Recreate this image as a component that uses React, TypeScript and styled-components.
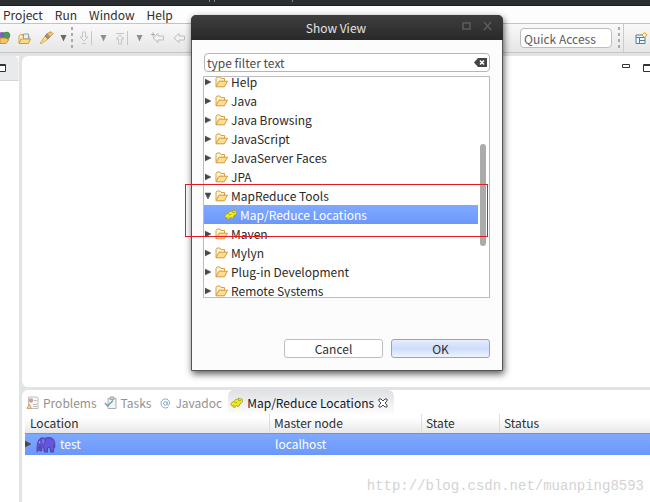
import React from "react";
import styled, { createGlobalStyle } from "styled-components";

const Global = createGlobalStyle`
  * { box-sizing: border-box; }
  body { margin: 0; overflow: hidden; }
  body, button, input, table {
    font-family: "Noto Sans CJK SC", "Open Sans", sans-serif;
    font-size: 12px;
    line-height: 18px;
    color: #2e2e2e;
  }
  svg { display: block; flex: none; }
`;

const Page = styled.div`
  position: relative;
  display: flex;
  flex-direction: column;
  height: 100vh;
  min-height: 480px;
  overflow: hidden;
  background: #fff;
`;

const TopBar = styled.div`
  height: 6px;
  flex: none;
  background: #2b2e31;
  border-bottom: 1px solid #1a1c1e;
  padding-left: 209px;
`;

const MenuBar = styled.nav`
  display: flex;
  flex: none;
  gap: 12px;
  height: 18px;
  padding-left: 3px;
  background: #fdfdfd;
  border-bottom: 1px solid #c4c4c4;
`;

const MenuItem = styled.button`
  border: 0;
  padding: 0;
  background: none;
  line-height: 17px;
`;

const Toolbar = styled.div`
  display: flex;
  flex: none;
  align-items: center;
  height: 29px;
  background: linear-gradient(#f9f9f9, #e6e6e6);
  border-bottom: 1px solid #c6c6c6;
`;

const ToolButton = styled.button<{ $w: number }>`
  display: flex;
  align-items: center;
  justify-content: center;
  width: ${(p) => p.$w}px;
  height: 20px;
  padding: 0;
  border: 0;
  background: none;
`;

const Dots = styled.span`
  width: 2px;
  height: 22px;
  background: repeating-linear-gradient(#aaa 0 3px, transparent 3px 6px);
`;

const Rule = styled.span`
  width: 1px;
  height: 28px;
  margin: 0 9px 0 3px;
  background: #ccc;
`;

const QuickAccess = styled.input`
  width: 92px;
  height: 20px;
  margin: 0 6px 0 auto;
  padding: 0 3px;
  border: 1px solid #bdbdbd;
  border-radius: 4px;
  background: #fff;
  &::placeholder { color: #5c5c5c; opacity: 1; }
`;

const Workbench = styled.div`
  display: flex;
  flex: 1;
  min-height: 0;
  background: #e2e3e4;
`;

const SideStrip = styled.div`
  width: 19px;
  flex: none;
  margin-top: 3px;
  background: #fff;
`;

const SideTab = styled.div`
  height: 25px;
  padding-top: 8px;
  background: #e9eaeb;
  border-right: 1px solid #f4f4f4;
  border-bottom: 1px solid #d6d6d6;
  border-radius: 0 5px 0 0;
`;

const Areas = styled.div`
  display: flex;
  flex: 1;
  flex-direction: column;
  min-width: 0;
  gap: 3px;
  padding: 3px 0 0 3px;
`;

const Editor = styled.section`
  display: flex;
  flex: 1;
  justify-content: flex-end;
  gap: 13px;
  padding-top: 8px;
  background: #fff;
  border-radius: 6px 0 0 6px;
`;

const BottomPanel = styled.section`
  height: 112px;
  flex: none;
  padding-left: 3px;
  background: #fff;
  border-radius: 6px 0 0 0;
`;

const Tabs = styled.div`
  display: flex;
  height: 24px;
`;

const Tab = styled.button<{ $active?: boolean }>`
  display: flex;
  align-items: center;
  gap: 4px;
  height: 24px;
  padding: 2px 6px 0 ${(p) => (p.$active ? 2 : 1)}px;
  border: 0;
  border-radius: 6px 6px 0 0;
  background: ${(p) => (p.$active ? "linear-gradient(#dfe0e3, #fdfdfd)" : "none")};
  color: ${(p) => (p.$active ? "#14141f" : "#929292")};
  white-space: nowrap;
`;

const Table = styled.table`
  width: 100%;
  table-layout: fixed;
  border-collapse: collapse;
`;

const Head = styled.th<{ $w?: number }>`
  width: ${(p) => (p.$w ? p.$w + "px" : "auto")};
  height: 19px;
  padding: 0 0 0 5px;
  text-align: left;
  font-weight: 400;
  color: #2e2e2e;
  background: linear-gradient(#fff 20%, #e8e8e8);
  border-bottom: 1px solid #7d92bd;
  & + & { box-shadow: inset 1px 0 #ddd; }
`;

const Cell = styled.td`
  height: 22px;
  padding: 0 0 0 6px;
  color: #fff;
`;

const SelectedRow = styled.tr`
  background: linear-gradient(#80aaff, #6b97fa);
`;

const NodeLabel = styled.div`
  display: flex;
  align-items: center;
  gap: 4px;
  margin-left: -6px;
`;

const Watermark = styled.div`
  position: absolute;
  right: 6px;
  bottom: 7px;
  font-family: "Liberation Mono", monospace;
  font-size: 14px;
  line-height: 18px;
  color: #d3d3d3;
`;

const Dialog = styled.section`
  position: absolute;
  top: 15px;
  left: 191px;
  width: 312px;
  border: 1px solid #555;
  border-radius: 5px 5px 0 0;
  background: #fcfcfc;
  box-shadow: 1px 3px 7px rgba(0, 0, 0, 0.65);
`;

const TitleBar = styled.header`
  display: grid;
  grid-template-columns: 44px 1fr 44px;
  align-items: center;
  height: 25px;
  margin: -1px -1px 0;
  border-radius: 5px 5px 0 0;
  background: linear-gradient(#3e3e3e, #292929);
`;

const Title = styled.h1`
  margin: 0 0 0 -22px;
  font-size: 12px;
  font-weight: 400;
  line-height: 18px;
  text-align: center;
  color: #e4e4e4;
`;

const WindowButtons = styled.div`
  display: flex;
  padding-bottom: 4px;
`;

const DialogBody = styled.div`
  padding: 13px 12px 12px 11px;
`;

const FilterBox = styled.div`
  display: flex;
  align-items: center;
  height: 19px;
  margin-left: 1px;
  padding: 0 2px;
  border: 1px solid #b5b5b5;
  border-radius: 4px;
  background: #fff;
`;

const FilterInput = styled.input`
  flex: 1;
  min-width: 0;
  height: 17px;
  padding: 0;
  border: 0;
  outline: 0;
  background: none;
  &::placeholder { color: #4c4c4c; opacity: 1; }
`;

const Tree = styled.div`
  display: flex;
  height: 222px;
  margin-top: 4px;
  overflow: hidden;
  border: 1px solid #bcbcbc;
  background: #fff;
`;

const TreeList = styled.ul`
  flex: 1;
  margin: -5px 2px 0 0;
  padding: 0;
  list-style: none;
  line-height: 12px;
`;

const TreeRow = styled.li<{ $child?: boolean }>`
  display: flex;
  align-items: center;
  gap: 3px;
  height: 19px;
  padding-left: ${(p) => (p.$child ? 20 : 1)}px;
  background: ${(p) => (p.$child ? "linear-gradient(#80aaff, #6b97fa)" : "none")};
  color: ${(p) => (p.$child ? "#fff" : "#2a2a2a")};
`;

const Expand = styled.span`
  margin-right: 1px;
`;

const Thumb = styled.div`
  width: 6px;
  height: 102px;
  margin: 67px 3px 0 0;
  border-radius: 3px;
  background: #ababab;
`;

const Buttons = styled.div`
  display: flex;
  justify-content: flex-end;
  gap: 8px;
  margin-top: 41px;
`;

const DialogButton = styled.button<{ $primary?: boolean }>`
  width: 99px;
  height: 19px;
  padding: 0;
  line-height: 16px;
  border: 1px solid ${(p) => (p.$primary ? "#94a4c6" : "#bdbdbd")};
  border-radius: 3px;
  background: ${(p) => (p.$primary ? "linear-gradient(#e6edfc, #cddcfa 50%, #edf4ff)" : "#fff")};
`;

const Highlight = styled.div`
  position: absolute;
  top: 184px;
  left: 185px;
  width: 303px;
  height: 53px;
  border: 1px solid #e01b22;
  pointer-events: none;
`;

const Folder = () => (
  <svg width="13" height="12" viewBox="0 0 13 12">
    <path d="M1 10.5V2.5L2 1h3l1 1.5h3.5V5" fill="#fff3cc" stroke="#d6a049" />
    <path d="M1 10.8 4 5.2h8.5L9.3 10.8z" fill="#fddf92" stroke="#d6963a" strokeLinejoin="round" />
  </svg>
);

const Expander = ({ open }: { open?: boolean }) => (
  <Expand>
    <svg width="6" height="8" viewBox="0 0 6 8">
      <path d={open ? "M0 1h6L3 7z" : "M0 1v6l6-3z"} fill="#484848" stroke="#484848" strokeWidth=".5" />
    </svg>
  </Expand>
);

const Hadoop = () => (
  <svg width="13" height="12" viewBox="0 0 13 12">
    <path
      d="M.8 7.2 2.2 5l2-.6L5.4 2.6l2.2-.4.8-1 2 .4 1.8.6.3 2.3-1.3 1.8-1.4.4-.6 2.2-1.5.8-.6-1.4-1.4.7-.6 1.4-1.8-.2-.3-1.4-1.4-.2z"
      fill="#f0ee20"
      stroke="#a29a20"
      strokeWidth=".8"
      strokeLinejoin="round"
    />
    <path d="M4.2 4.6 5.6 6l1.8-.8M8.4 1.6l.4 2 2.2.2M3.6 8.8l1.2-1" fill="none" stroke="#8f8716" strokeWidth=".7" />
  </svg>
);

const Elephant = () => (
  <svg width="20" height="17" viewBox="0 0 20 17">
    <path
      d="M1.2 15.8C.8 12 1 7 3 3.8 4 1.8 6.5 1.2 8.5 2.4 11 1.2 15 1 17 3c2 2 2 5 1.7 8.5L18 9.5l-.6 6.5h-2.8l-.6-4.5-2.6.3.2 4.2H8.4l-.9-5-1.3-.8L5.6 15H3.7l.5-5.6C3.2 11 3.2 14.6 1.2 15.8z"
      fill="#6554dd"
      stroke="#473986"
      strokeWidth=".8"
    />
    <path d="M8.5 3c1.3 2 .8 4.5-1 6L5 6.5 5.5 3" fill="#7c6cf0" stroke="#44358e" strokeWidth=".7" />
    <path d="M3.2 6.2h1" stroke="#fff" />
  </svg>
);

const Caret = ({ dim }: { dim?: boolean }) => (
  <svg width="7" height="7" viewBox="0 0 7 7">
    <path d="M.5 0h6l-3 6.5z" fill={dim ? "#8e8e8e" : "#666"} />
  </svg>
);

const Globe = () => (
  <svg width="11" height="14" viewBox="0 0 11 14">
    <circle cx="2" cy="4" r="3" fill="#8062b4" />
    <circle cx="6.5" cy="4.5" r="3.4" fill="#4e9b58" stroke="#347452" strokeWidth=".6" />
    <path d="M0 7h5l4 1.5L6 12.5H0z" fill="#f4c765" stroke="#bb8231" strokeWidth=".8" />
  </svg>
);

const OpenFolder = () => (
  <svg width="13" height="13" viewBox="0 0 13 13">
    <path d="M1 11V4l1.5-1.5h2V4H11v3" fill="#fff0bd" stroke="#d6a049" />
    <path d="M5.5 2h5v5h-5z" fill="#e7f0fa" stroke="#88a4c0" />
    <path d="M1 11.5 3 7h9.5l-2.2 4.5z" fill="#fddb86" stroke="#d6963a" />
  </svg>
);

const Torch = () => (
  <svg width="15" height="14" viewBox="0 0 15 14">
    <path d="M1 12.5 6 5l3 3-6.5 4.5z" fill="#fbd987" stroke="#d59a48" strokeWidth=".8" />
    <path d="m6 5 2-2.3L11 5.8 9 8z" fill="#a68b9a" stroke="#77636d" strokeWidth=".6" />
    <path d="m8 2.7 4-2 2 2-3 3.1z" fill="#f6c466" stroke="#c3852d" strokeWidth=".8" />
  </svg>
);

const DownArrow = () => (
  <svg width="13" height="14" viewBox="0 0 13 14">
    <path d="M3.5 1h3v5H9L5 10 1 6h2.5zM3 12.5h4M12.5 0v14" fill="none" stroke="#c6c6c6" />
  </svg>
);

const UpArrow = () => (
  <svg width="13" height="14" viewBox="0 0 13 14">
    <path d="M3.5 13h3V8H9L5 4 1 8h2.5zM1 2.5h8M12.5 0v14" fill="none" stroke="#c6c6c6" />
  </svg>
);

const LeftArrow = ({ star }: { star?: boolean }) => (
  <svg width="14" height="12" viewBox="0 0 14 12">
    <path d="M2 6 7 1.5V4h5.5v4H7v2.5z" fill="#f2f2f2" stroke="#bdbdbd" />
    {star && <path d="M0 2.5h4M2 .5v4" stroke="#aaa" />}
  </svg>
);

const Perspective = () => (
  <svg width="13" height="13" viewBox="0 0 13 13">
    <path d="M1 3h9v8.5H1z" fill="#eff7fd" stroke="#567d99" />
    <path d="M1 5.5h9M4.5 5.5v6M4.5 8.5H10" stroke="#567d99" fill="none" />
    <path d="m9.5.5 2.5 2.5-2.5 2.5L7 3z" fill="#fff3b1" stroke="#c9a537" />
  </svg>
);

const Problems = () => (
  <svg width="13" height="14" viewBox="0 0 13 14">
    <path d="M2.5 1H11l1 1v10.5H2.5z" fill="#f8f8f8" stroke="#c1bcb6" />
    <circle cx="5" cy="4.5" r="2.2" fill="#dc9c90" />
    <path d="M1 12.5 3.2 8l2.3 4.5z" fill="#f0d49b" stroke="#c8a778" />
    <path d="M8 4.5h3M7 8.5h4M7 10.5h4" stroke="#b9bec8" />
  </svg>
);

const Tasks = () => (
  <svg width="13" height="14" viewBox="0 0 13 14">
    <path d="M4 2.5h8v10H4z" fill="#f2f4f5" stroke="#b1adaa" />
    <path d="M6 1h4v2.5H6z" fill="#d2d2cf" stroke="#a9a6a0" />
    <path d="m1 7 2.5 3L9 4.5" fill="none" stroke="#6ca0b9" strokeWidth="1.5" />
  </svg>
);

const At = () => (
  <svg width="13" height="11" viewBox="-2 0 13 11" fill="none" stroke="#86aaca">
    <circle cx="5.3" cy="5.5" r="1.8" />
    <path d="M7.2 3.5v3c.5 1.3 2.5.6 2.5-1.2C9.5 2.5 7.8 1 5.4 1 2.8 1 1 2.8 1 5.5S3 10 5.5 10c1 0 2-.3 2.8-.9" />
  </svg>
);

const CloseTab = () => (
  <svg width="10" height="10" viewBox="0 0 10 10">
    <path d="M1 1h2l2 2 2-2h2v2L7 5l2 2v2H7L5 7 3 9H1V7l2-2-2-2z" fill="#fff" stroke="#4a4a4a" />
  </svg>
);

const ClearIcon = () => (
  <svg width="13" height="9" viewBox="0 0 13 9">
    <path d="M0 4.5 4 0h9v9H4z" fill="#454545" />
    <path d="m6 2.5 4 4m0-4-4 4" stroke="#fff" strokeWidth="1.5" />
  </svg>
);

const Minimize = () => (
  <svg width="8" height="4" viewBox="0 0 8 4">
    <path d="M.5.5h7v3h-7z" fill="#fff" stroke="#333" />
  </svg>
);

const Maximize = () => (
  <svg width="7" height="9" viewBox="0 0 7 9">
    <path d="M8 .5H.5v7H8M0 1.5h8" fill="none" stroke="#333" />
  </svg>
);

const Restore = () => (
  <svg width="7" height="9" viewBox="0 0 7 9">
    <path d="M0 .5h5.5v7H0M0 1.5h6" fill="#fff" stroke="#333" />
  </svg>
);

const above = ["Help", "Java", "Java Browsing", "JavaScript", "JavaServer Faces", "JPA"];
const below = ["Maven", "Mylyn", "Plug-in Development", "Remote Systems"];

const Category = ({ name, open }: { name: string; open?: boolean }) => (
  <TreeRow>
    <Expander open={open} />
    <Folder />
    {name}
  </TreeRow>
);

export default function App() {
  return (
    <Page>
      <Global />
      <TopBar>
        <svg width="86" height="2" viewBox="0 0 86 2">
          <path d="M0 0h1v2H0zM5 0h1v2H5zM83 0h1v2h-1z" fill="#85888a" />
        </svg>
      </TopBar>
      <MenuBar>
        {["Project", "Run", "Window", "Help"].map((m) => (
          <MenuItem key={m}>{m}</MenuItem>
        ))}
      </MenuBar>
      <Toolbar>
        <ToolButton $w={11} aria-label="New web project"><Globe /></ToolButton>
        <ToolButton $w={26} aria-label="Open"><OpenFolder /></ToolButton>
        <ToolButton $w={19} aria-label="Search"><Torch /></ToolButton>
        <ToolButton $w={15} aria-label="Search options"><Caret /></ToolButton>
        <Dots />
        <ToolButton $w={24} aria-label="Next annotation"><DownArrow /></ToolButton>
        <ToolButton $w={12} aria-label="Next options"><Caret dim /></ToolButton>
        <ToolButton $w={24} aria-label="Previous annotation"><UpArrow /></ToolButton>
        <ToolButton $w={13} aria-label="Previous options"><Caret dim /></ToolButton>
        <ToolButton $w={23} aria-label="Last edit location"><LeftArrow star /></ToolButton>
        <ToolButton $w={20} aria-label="Back"><LeftArrow /></ToolButton>
        <QuickAccess aria-label="Quick Access" placeholder="Quick Access" />
        <Dots />
        <Rule />
        <ToolButton $w={17} aria-label="Open perspective"><Perspective /></ToolButton>
      </Toolbar>
      <Workbench>
        <SideStrip>
          <SideTab><Restore /></SideTab>
        </SideStrip>
        <Areas>
          <Editor>
            <Minimize />
            <Maximize />
          </Editor>
          <BottomPanel>
            <Tabs>
              <Tab><Problems />Problems</Tab>
              <Tab><Tasks />Tasks</Tab>
              <Tab><At />Javadoc</Tab>
              <Tab $active><Hadoop />Map/Reduce Locations<CloseTab /></Tab>
            </Tabs>
            <Table>
              <thead>
                <tr>
                  <Head $w={244}>Location</Head>
                  <Head $w={152}>Master node</Head>
                  <Head $w={78}>State</Head>
                  <Head>Status</Head>
                </tr>
              </thead>
              <tbody>
                <SelectedRow>
                  <Cell>
                    <NodeLabel><Expander /><Elephant />test</NodeLabel>
                  </Cell>
                  <Cell>localhost</Cell>
                  <Cell />
                  <Cell />
                </SelectedRow>
              </tbody>
            </Table>
          </BottomPanel>
        </Areas>
      </Workbench>
      <Watermark>http://blog.csdn.net/muanping8593</Watermark>
      <Dialog role="dialog" aria-label="Show View">
        <TitleBar>
          <span />
          <Title>Show View</Title>
          <WindowButtons>
            <svg width="36" height="10" viewBox="0 0 36 10" fill="none" stroke="#5c5c5c">
              <path d="M4 2h7v6H4z" strokeWidth="1.5" />
              <path d="m25 1 7 8m0-8-7 8" strokeWidth="1.5" />
            </svg>
          </WindowButtons>
        </TitleBar>
        <DialogBody>
          <FilterBox>
            <FilterInput aria-label="Filter" placeholder="type filter text" />
            <ClearIcon />
          </FilterBox>
          <Tree>
            <TreeList>
              {above.map((n) => <Category key={n} name={n} />)}
              <Category name="MapReduce Tools" open />
              <TreeRow $child><Hadoop />Map/Reduce Locations</TreeRow>
              {below.map((n) => <Category key={n} name={n} />)}
            </TreeList>
            <Thumb />
          </Tree>
          <Buttons>
            <DialogButton>Cancel</DialogButton>
            <DialogButton $primary>OK</DialogButton>
          </Buttons>
        </DialogBody>
      </Dialog>
      <Highlight />
    </Page>
  );
}
